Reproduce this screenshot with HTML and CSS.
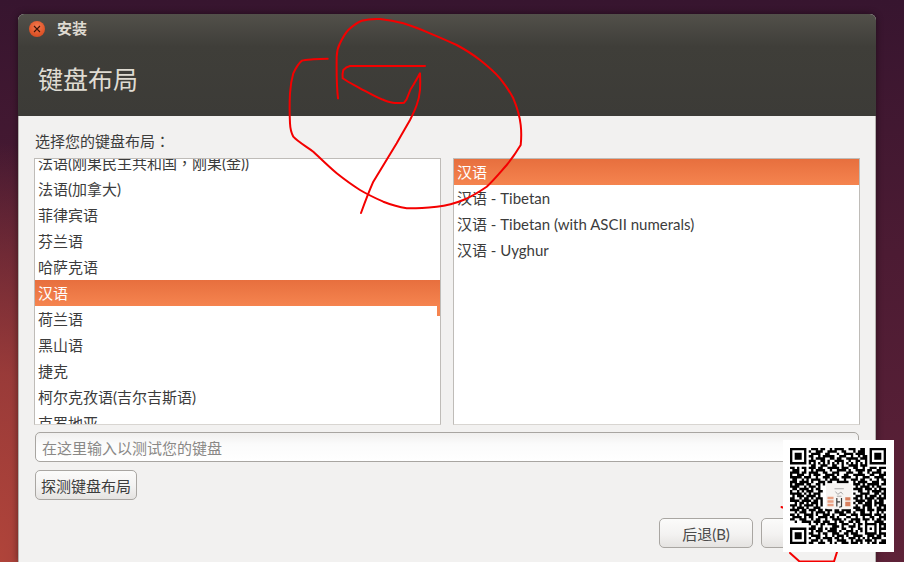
FILE: index.html
```html
<!DOCTYPE html>
<html lang="zh-CN">
<head>
<meta charset="utf-8">
<title>安装</title>
<link rel="stylesheet" href="styles.css">
</head>
<body>
<main class="window">
  <header class="head">
    <div class="titlebar">
      <span class="close"><svg viewBox="0 0 8 8" width="8" height="8"><path d="M1 1l6 6M7 1l-6 6" stroke="#3a1408" stroke-width="1.1" fill="none"/></svg></span>
      <span class="title">安装</span>
    </div>
    <h1 class="heading">键盘布局</h1>
  </header>
  <section class="content">
    <div class="label">选择您的键盘布局<span class="punct" lang="zh-TW">：</span></div>
    <div class="lists">
      <div class="list list-scrolled">
        <div class="row">法语(刚果民主共和国<span class="punct" lang="zh-TW">，</span>刚果(金))</div>
        <div class="row">法语(加拿大)</div>
        <div class="row">菲律宾语</div>
        <div class="row">芬兰语</div>
        <div class="row">哈萨克语</div>
        <div class="row selected">汉语</div>
        <div class="row">荷兰语</div>
        <div class="row">黑山语</div>
        <div class="row">捷克</div>
        <div class="row">柯尔克孜语(吉尔吉斯语)</div>
        <div class="row">克罗地亚</div>
        <span class="thumb"></span>
      </div>
      <div class="list">
        <div class="row selected">汉语</div>
        <div class="row">汉语 - Tibetan</div>
        <div class="row">汉语 - Tibetan (with ASCII numerals)</div>
        <div class="row">汉语 - Uyghur</div>
      </div>
    </div>
    <div class="entry">在这里输入以测试您的键盘</div>
    <div class="detect"><button class="btn btn-detect">探测键盘布局</button></div>
    <div class="actions">
      <button class="btn btn-nav">后退(B)</button>
      <button class="btn btn-next">继续</button>
    </div>
  </section>
</main>

<svg class="scribble" width="904" height="562" viewBox="0 0 904 562" fill="none" stroke="#f40000" stroke-width="2" stroke-linejoin="round" stroke-linecap="round">
  <path d="M338 98.3C336.5 85 336.5 70 336.7 56.7C337 50 338 47 340 43.3C342.5 38 345 33.5 348.3 30C353 25.5 357 22.5 361.7 20.7C367 19.3 373 18.7 380 19C388 19.8 395 21 403.3 23.3C412 26 421 29.5 430 33.3C439 37 448 41 456.7 45C465 49.5 473 54.5 480 60C487 65.5 494 71.5 500 78.3C505 84.5 509.5 91 513.3 98.3C517 107 519.7 116 520.7 125C521.5 132 521.3 139 520.7 145C516.5 152 512 158.5 506.7 165C500 172.5 494 180 486.7 186.7C479 192 471.5 196.5 463.3 200C455 203.5 446 205.7 436.7 206.7C427 207.7 416.5 208.7 406.7 208.3C398.5 207 391 204.7 383.3 201.7C375 198 367.5 194.5 360 190C352 185 344.5 179.5 336.7 173.3C328.5 166.5 321 159 313.3 151.7C306.5 146.5 298 142 293.3 136.7C291 132.5 290.2 128 290 123.3C289.5 113 289.5 103 290 93.3C290.5 86 291.5 79.5 293.3 73.3C295.5 68.5 298 64 301.7 60.7C305 59.7 309 59.6 313.3 59.3C318 59 323 58.8 327.7 58.7"/>
  <path d="M425 66L350 66C347 66.5 345 68 343.3 70C342.5 72.5 342.4 75.5 342.7 78.3C348 82 354 85 360 88.3C367 92 374.5 96.5 381.7 99.3C386 100.8 390.5 102.8 395 103C398 103.2 401 103.2 404 102.7C406.2 100.5 407.5 98 408.3 95C409.5 91 411 88 413.3 85C415.8 81 418 77 420 73.3C420.3 78.5 420.3 84.5 420 90C419.5 95.5 418.5 100 416.7 105C415 110 412.5 115 410 120C405.5 128 401 135.5 396.7 143.3C389 156 381 169 373.3 181.7C369 191.5 365 202 361 213"/>
  <path d="M790 553L799.5 561.5L834 561.5L837 552"/>
  <path d="M781.5 507L782.5 507.5"/>
</svg>

<aside class="qr">
  <svg class="qr-code" width="96" height="96" viewBox="0 0 41 41">
    <path fill="none" stroke="#000" stroke-width="1.02" d="M0 .5h7M9 .5h3M13 .5h2M17 .5h1M19 .5h4M25 .5h3M30 .5h2M34 .5h7
M0 1.5h1M6 1.5h1M8 1.5h1M11 1.5h3M16 1.5h4M22 1.5h2M27 1.5h1M29 1.5h3M34 1.5h1M40 1.5h1
M0 2.5h1M2 2.5h3M6 2.5h1M9 2.5h4M15 2.5h2M20 2.5h1M23 2.5h4M28 2.5h4M34 2.5h1M36 2.5h3M40 2.5h1
M0 3.5h1M2 3.5h3M6 3.5h1M8 3.5h2M12 3.5h1M14 3.5h5M21 3.5h3M26 3.5h1M29 3.5h1M31 3.5h2M34 3.5h1M36 3.5h3M40 3.5h1
M0 4.5h1M2 4.5h3M6 4.5h1M9 4.5h1M11 4.5h4M17 4.5h2M20 4.5h2M24 4.5h5M30 4.5h3M34 4.5h1M36 4.5h3M40 4.5h1
M0 5.5h1M6 5.5h1M8 5.5h3M13 5.5h2M16 5.5h1M19 5.5h4M25 5.5h1M28 5.5h2M32 5.5h1M34 5.5h1M40 5.5h1
M0 6.5h7M8 6.5h1M10 6.5h1M12 6.5h1M14 6.5h1M16 6.5h1M18 6.5h1M20 6.5h1M22 6.5h1M24 6.5h1M26 6.5h1M28 6.5h1M30 6.5h1M32 6.5h1M34 6.5h7
M9 7.5h2M13 7.5h3M18 7.5h2M22 7.5h1M25 7.5h4M30 7.5h3
M0 8.5h2M3 8.5h1M5 8.5h2M8 8.5h3M12 8.5h2M16 8.5h5M22 8.5h3M27 8.5h2M31 8.5h1M34 8.5h3M38 8.5h3
M1 9.5h3M6 9.5h1M9 9.5h1M11 9.5h4M17 9.5h1M20 9.5h4M25 9.5h1M28 9.5h4M33 9.5h2M37 9.5h2
M0 10.5h4M5 10.5h2M8 10.5h4M14 10.5h2M18 10.5h3M24 10.5h3M29 10.5h2M33 10.5h1M35 10.5h4M40 10.5h1
M0 11.5h1M3 11.5h3M8 11.5h1M10 11.5h3M15 11.5h4M20 11.5h1M23 11.5h2M27 11.5h5M34 11.5h2M38 11.5h3
M0 12.5h5M6 12.5h3M11 12.5h1M14 12.5h3M18 12.5h2M22 12.5h4M28 12.5h1M31 12.5h3M36 12.5h4
M1 13.5h2M5 13.5h1M7 13.5h1M9 13.5h4M15 13.5h1M17 13.5h4M23 13.5h1M26 13.5h3M30 13.5h2M34 13.5h1M37 13.5h1M39 13.5h2
M0 14.5h3M4 14.5h4M9 14.5h1M12 14.5h3M16 14.5h2M20 14.5h5M27 14.5h1M29 14.5h4M35 14.5h3M40 14.5h1
M0 15.5h1M2 15.5h4M7 15.5h2M11 15.5h2M14 15.5h1M27 15.5h3M31 15.5h1M33 15.5h5M39 15.5h2
M0 16.5h4M6 16.5h1M8 16.5h3M12 16.5h1M28 16.5h1M30 16.5h4M35 16.5h1M37 16.5h2
M1 17.5h2M4 17.5h4M9 17.5h1M11 17.5h2M27 17.5h4M32 17.5h3M36 17.5h1M38 17.5h3
M0 18.5h1M3 18.5h1M5 18.5h1M7 18.5h3M12 18.5h2M29 18.5h2M33 18.5h1M35 18.5h4M40 18.5h1
M0 19.5h5M6 19.5h1M8 19.5h1M10 19.5h3M27 19.5h1M30 19.5h4M36 19.5h2M39 19.5h2
M1 20.5h1M3 20.5h3M7 20.5h4M12 20.5h1M28 20.5h3M32 20.5h1M34 20.5h3M38 20.5h1M40 20.5h1
M0 21.5h2M4 21.5h1M6 21.5h2M9 21.5h1M11 21.5h3M27 21.5h2M30 21.5h1M32 21.5h4M37 21.5h4
M0 22.5h4M5 22.5h4M10 22.5h2M13 22.5h1M28 22.5h4M33 22.5h2M36 22.5h1M38 22.5h2
M2 23.5h1M4 23.5h2M7 23.5h1M9 23.5h3M13 23.5h1M27 23.5h1M29 23.5h2M32 23.5h3M36 23.5h4
M0 24.5h3M4 24.5h1M6 24.5h4M11 24.5h1M13 24.5h1M28 24.5h1M31 24.5h4M36 24.5h1M38 24.5h3
M1 25.5h1M3 25.5h3M7 25.5h1M10 25.5h3M27 25.5h3M31 25.5h1M33 25.5h2M37 25.5h2M40 25.5h1
M0 26.5h4M5 26.5h2M8 26.5h3M12 26.5h2M15 26.5h3M19 26.5h2M22 26.5h4M28 26.5h4M33 26.5h3M37 26.5h4
M2 27.5h1M4 27.5h3M9 27.5h1M11 27.5h4M16 27.5h1M19 27.5h4M24 27.5h2M27 27.5h1M30 27.5h2M34 27.5h1M37 27.5h1M39 27.5h1
M0 28.5h2M3 28.5h1M6 28.5h4M11 28.5h1M14 28.5h3M18 28.5h1M21 28.5h3M26 28.5h3M30 28.5h5M36 28.5h3M40 28.5h1
M1 29.5h4M6 29.5h1M8 29.5h2M12 29.5h4M17 29.5h2M20 29.5h1M24 29.5h2M28 29.5h1M31 29.5h1M34 29.5h2M38 29.5h3
M0 30.5h2M4 30.5h3M9 30.5h1M11 30.5h2M15 30.5h1M18 30.5h4M23 30.5h1M26 30.5h4M31 30.5h3M35 30.5h1M37 30.5h2M40 30.5h1
M2 31.5h1M5 31.5h4M10 31.5h3M14 31.5h3M19 31.5h1M21 31.5h2M25 31.5h2M28 31.5h2M32 31.5h1M36 31.5h4
M8 32.5h1M11 32.5h1M13 32.5h2M16 32.5h4M22 32.5h3M27 32.5h1M29 32.5h2M32 32.5h5M38 32.5h3
M9 33.5h2M13 33.5h1M18 33.5h3M22 33.5h1M25 33.5h3M29 33.5h1M32 33.5h1M36 33.5h1M38 33.5h1M40 33.5h1
M0 34.5h7M8 34.5h3M12 34.5h2M15 34.5h1M17 34.5h3M22 34.5h2M26 34.5h1M29 34.5h2M32 34.5h1M34 34.5h1M36 34.5h1M38 34.5h3
M0 35.5h1M6 35.5h1M9 35.5h1M11 35.5h3M16 35.5h4M21 35.5h1M24 35.5h3M28 35.5h1M30 35.5h1M32 35.5h1M36 35.5h1M38 35.5h1
M0 36.5h1M2 36.5h3M6 36.5h1M8 36.5h2M12 36.5h1M14 36.5h2M18 36.5h3M23 36.5h2M26 36.5h3M32 36.5h5M38 36.5h3
M0 37.5h1M2 37.5h3M6 37.5h1M9 37.5h4M15 37.5h1M18 37.5h1M20 37.5h3M24 37.5h1M27 37.5h4M33 37.5h3M37 37.5h2M40 37.5h1
M0 38.5h1M2 38.5h3M6 38.5h1M8 38.5h1M11 38.5h2M14 38.5h4M19 38.5h2M22 38.5h1M25 38.5h3M29 38.5h1M31 38.5h1M33 38.5h1M35 38.5h4
M0 39.5h1M6 39.5h1M9 39.5h3M13 39.5h1M16 39.5h2M20 39.5h4M26 39.5h1M28 39.5h3M32 39.5h3M36 39.5h1M39 39.5h2
M0 40.5h7M8 40.5h2M12 40.5h3M17 40.5h1M19 40.5h1M22 40.5h3M26 40.5h3M30 40.5h1M33 40.5h1M35 40.5h2M38 40.5h3"/>
    <rect x="15.4" y="15.2" width="11" height="11" rx="1" fill="#f6f4f2"/>
    <path fill="#e9a184" d="M16 20.8h2.6v1.1H16zM16 22.3h2.6v1.1H16zM16 23.8h2.6v1.1H16z"/>
    <path fill="#d8805f" d="M23.6 21h2.2v1.4h-2.2zM23.6 23h2.2v1.9h-2.2z"/>
    <path fill="none" stroke="#9a9a9a" stroke-width=".35" d="M19 17.4h4M19.4 18.6l1 1.2 1.4-1 .8 1M20 20.6h2"/>
    <path fill="none" stroke="#333" stroke-width=".5" d="M20 21.4v3.6M20 23h1.4M22 21.4v3.6l-1 .3"/>
  </svg>
</aside>
</body>
</html>
```
FILE: styles.css
```css
* { box-sizing: border-box; }

html, body { margin: 0; height: 562px; overflow: hidden; }

body {
  position: relative;
  padding: 14px 28px 0 18px;
  font-family: Lato, "Noto Sans CJK SC", sans-serif;
  font-size: 15px;
  color: #3c3c3c;
  background:
    radial-gradient(ellipse 140px 420px at 0 562px, #b0443a 0%, rgba(176, 68, 58, .75) 45%, rgba(176, 68, 58, 0) 100%),
    linear-gradient(180deg, #37152f 0%, #4c1b33 45%, #5e2238 100%);
}

.window {
  height: 548px;
  display: flex;
  flex-direction: column;
  background: #f2f1f0;
  border-radius: 6px 6px 0 0;
  box-shadow: 0 0 7px rgba(0, 0, 0, .45);
  overflow: hidden;
}

.head {
  height: 102px;
  flex: none;
  color: #dfdbd2;
  background: linear-gradient(180deg, #52504a 0%, #3f3e39 32%, #3c3b37 100%);
}

.titlebar {
  display: flex;
  align-items: center;
  gap: 12px;
  height: 29px;
  padding: 0 0 0 11px;
}

.close {
  width: 16px;
  height: 16px;
  margin-top: 1px;
  flex: none;
  display: flex;
  align-items: center;
  justify-content: center;
  border-radius: 50%;
  background: radial-gradient(circle at 50% 35%, #f37a50 0%, #e0562a 60%, #c8451f 100%);
}

.title {
  font-size: 15px;
  font-weight: 700;
  line-height: 20px;
  position: relative;
  top: -1px;
}

.heading {
  margin: 19px 0 0 20px;
  font-size: 25px;
  font-weight: 400;
  line-height: 34px;
}

.content {
  flex: 1;
  padding: 13px 15px 0;
  border-left: 1px solid #b4b2ae;
  border-right: 1px solid #b4b2ae;
}

.label {
  height: 29px;
  line-height: 24px;
  color: #3c3c3c;
  padding-left: 1px;
}

.punct { font-family: "Noto Sans CJK TC", sans-serif; }

.lists {
  display: grid;
  grid-template-columns: 407px 407px;
  gap: 12px;
}

.list {
  position: relative;
  height: 267px;
  background: #fff;
  border: 1px solid #bfbcb8;
  border-bottom-color: #d8d5d1;
  overflow: hidden;
}

.list-scrolled .row:first-child { margin-top: -9px; }

.row {
  height: 26px;
  line-height: 26px;
  padding-left: 3px;
  white-space: nowrap;
  color: #3c3c3c;
}

.selected {
  color: #fff;
  background: linear-gradient(180deg, #e76f3e 0%, #f5844f 100%);
}

.thumb {
  position: absolute;
  right: 0;
  top: 147px;
  width: 3px;
  height: 10px;
  background: #f5844f;
}

.entry {
  height: 30px;
  margin: 7px 1px 0;
  padding-left: 6px;
  line-height: 30px;
  color: #8a8886;
  border: 1px solid #a8a5a1;
  border-radius: 5px;
  background: linear-gradient(180deg, #f0efee 0%, #fbfbfb 40%, #fff 100%);
}

.detect {
  margin-top: 8px;
  padding-left: 1px;
}

.btn {
  height: 30px;
  padding: 0;
  font: inherit;
  color: #3c3c3c;
  border: 1px solid #a9a6a2;
  border-radius: 5px;
  background: linear-gradient(180deg, #fbfbfa 0%, #f3f2f1 55%, #e5e3e1 100%);
}

.btn-detect { width: 102px; }
.btn-nav { width: 94px; color: #4a4a4a; }
.btn-next { width: 99px; }

.actions {
  display: flex;
  justify-content: flex-end;
  gap: 8px;
  margin-top: 18px;
}

.scribble {
  position: absolute;
  left: 0;
  top: 0;
  pointer-events: none;
}

.qr {
  position: absolute;
  left: 783px;
  top: 440px;
  width: 111px;
  height: 112px;
  background: #fff;
  display: flex;
  align-items: center;
  justify-content: center;
}

.qr-code { display: block; margin: 0 1px 0 0; }
```
